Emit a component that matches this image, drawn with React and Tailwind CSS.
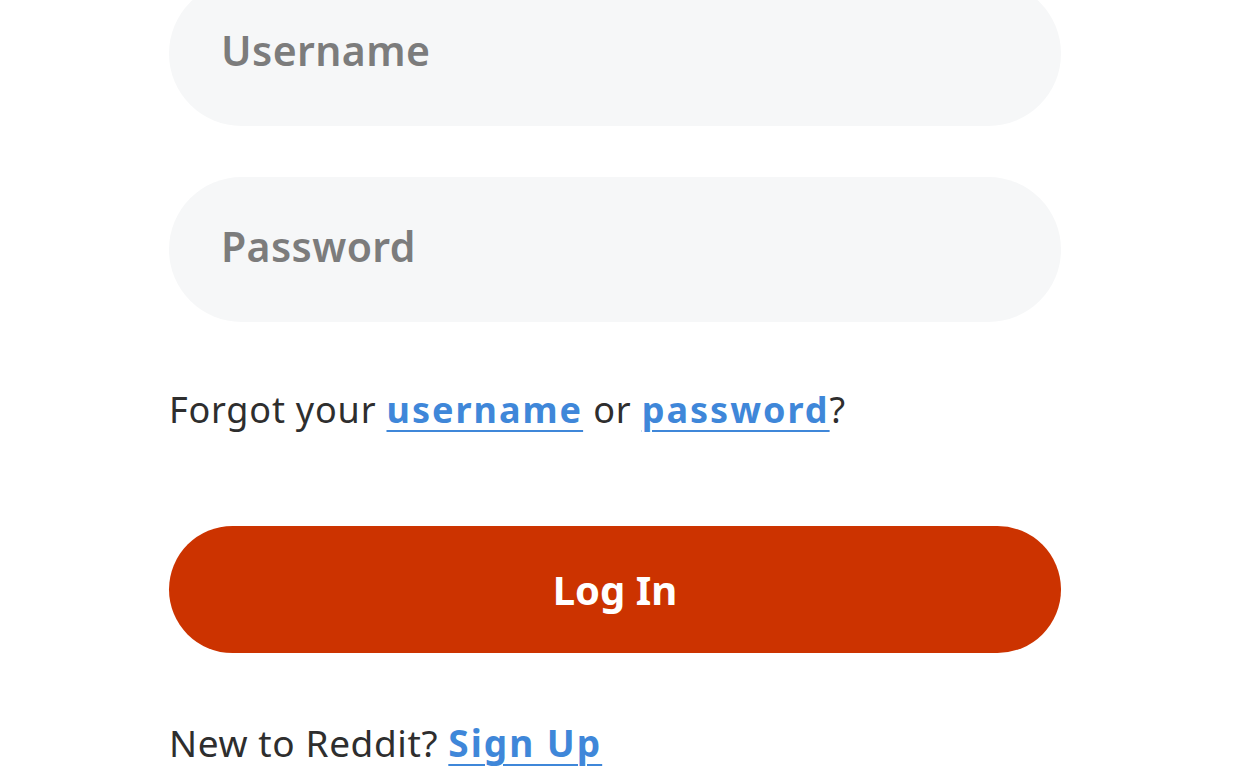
export default function App() {
  return (
    <div className="min-h-screen bg-white overflow-hidden">
      <div
        className="w-[892px] ml-[169px] -mt-[19px] flex flex-col"
        style={{ fontFamily: '"Noto Sans", "Open Sans", sans-serif' }}
      >
        <input
          type="text"
          placeholder="Username"
          className="h-[145px] w-full rounded-full bg-[#f6f7f8] pl-[52px] pb-[8px] text-[41px] font-semibold tracking-[0.4px] text-[#1c1c1c] placeholder:text-[#7c7c7c] outline-none"
        />
        <input
          type="password"
          placeholder="Password"
          className="mt-[51px] h-[145px] w-full rounded-full bg-[#f6f7f8] pl-[52px] pb-[8px] text-[41px] font-semibold tracking-[0.4px] text-[#1c1c1c] placeholder:text-[#7c7c7c] outline-none"
        />

        <p className="mt-[68px] text-[36px] leading-[40px] text-[#2e2e2e] tracking-[0.8px]">
          Forgot your{" "}
          <a href="#" className="font-bold text-[#3f87d9] underline decoration-2 underline-offset-[7px] tracking-[2px]">
            username
          </a>{" "}
          or{" "}
          <a href="#" className="font-bold text-[#3f87d9] underline decoration-2 underline-offset-[7px] tracking-[2px]">
            password
          </a>
          ?
        </p>

        <button className="mt-[96px] h-[127px] w-full rounded-full bg-[#cc3300] text-white text-[40px] font-bold">
          Log In
        </button>

        <p className="mt-[70px] text-[37px] leading-[40px] text-[#2e2e2e] tracking-[0.6px]">
          New to Reddit?{" "}
          <a href="#" className="font-bold text-[#3f87d9] underline decoration-2 underline-offset-[7px] tracking-[2px]">
            Sign Up
          </a>
        </p>
      </div>
    </div>
  );
}
